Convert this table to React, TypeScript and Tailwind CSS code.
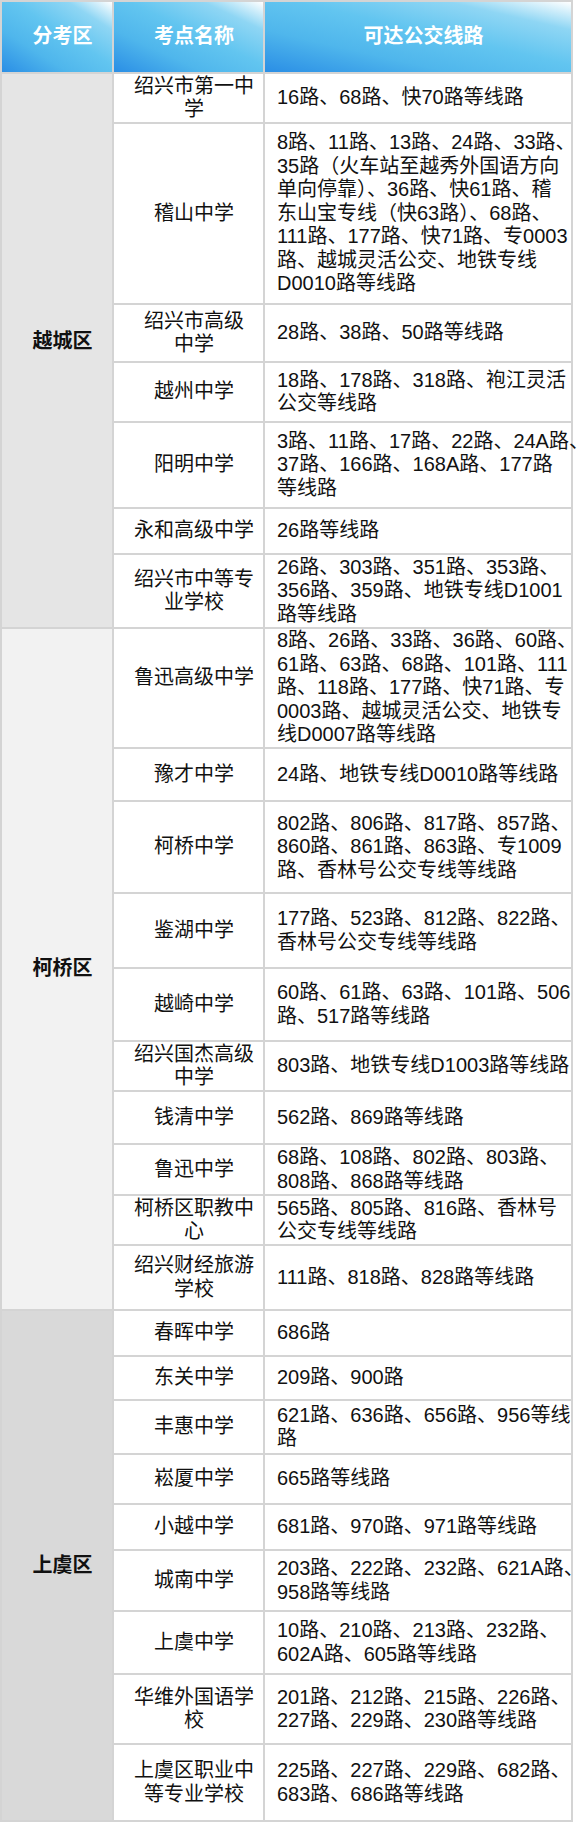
import React from "react";

type Row = { name: string[]; routes: string[]; nameCls?: string };
type Group = { label: string; bg: string; span: string; labelCls?: string; rows: Row[] };

const groups: Group[] = [
  {
    label: "越城区",
    bg: "bg-[#e5e5e5]",
    span: "row-span-7",
    labelCls: "pb-[18px]",
    rows: [
      { name: ["绍兴市第一中", "学"], routes: ["16路、68路、快70路等线路"] },
      {
        name: ["稽山中学"],
        routes: [
          "8路、11路、13路、24路、33路、",
          "35路（火车站至越秀外国语方向",
          "单向停靠）、36路、快61路、稽",
          "东山宝专线（快63路）、68路、",
          "111路、177路、快71路、专0003",
          "路、越城灵活公交、地铁专线",
          "D0010路等线路",
        ],
      },
      { name: ["绍兴市高级", "中学"], routes: ["28路、38路、50路等线路"] },
      { name: ["越州中学"], routes: ["18路、178路、318路、袍江灵活", "公交等线路"] },
      {
        name: ["阳明中学"],
        routes: ["3路、11路、17路、22路、24A路、", "37路、166路、168A路、177路", "等线路"],
      },
      { name: ["永和高级中学"], routes: ["26路等线路"] },
      {
        name: ["绍兴市中等专", "业学校"],
        routes: ["26路、303路、351路、353路、", "356路、359路、地铁专线D1001", "路等线路"],
      },
    ],
  },
  {
    label: "柯桥区",
    bg: "bg-[#f2f2f2]",
    span: "row-span-10",
    rows: [
      {
        name: ["鲁迅高级中学"],
        nameCls: "pb-[20px]",
        routes: [
          "8路、26路、33路、36路、60路、",
          "61路、63路、68路、101路、111",
          "路、118路、177路、快71路、专",
          "0003路、越城灵活公交、地铁专",
          "线D0007路等线路",
        ],
      },
      { name: ["豫才中学"], routes: ["24路、地铁专线D0010路等线路"] },
      {
        name: ["柯桥中学"],
        routes: ["802路、806路、817路、857路、", "860路、861路、863路、专1009", "路、香林号公交专线等线路"],
      },
      { name: ["鉴湖中学"], routes: ["177路、523路、812路、822路、", "香林号公交专线等线路"] },
      { name: ["越崎中学"], routes: ["60路、61路、63路、101路、506", "路、517路等线路"] },
      { name: ["绍兴国杰高级", "中学"], routes: ["803路、地铁专线D1003路等线路"] },
      { name: ["钱清中学"], routes: ["562路、869路等线路"] },
      { name: ["鲁迅中学"], routes: ["68路、108路、802路、803路、", "808路、868路等线路"] },
      { name: ["柯桥区职教中", "心"], routes: ["565路、805路、816路、香林号", "公交专线等线路"] },
      { name: ["绍兴财经旅游", "学校"], routes: ["111路、818路、828路等线路"] },
    ],
  },
  {
    label: "上虞区",
    bg: "bg-[#d9d9d9]",
    span: "row-span-9",
    rows: [
      { name: ["春晖中学"], routes: ["686路"] },
      { name: ["东关中学"], routes: ["209路、900路"] },
      { name: ["丰惠中学"], routes: ["621路、636路、656路、956等线", "路"] },
      { name: ["崧厦中学"], routes: ["665路等线路"] },
      { name: ["小越中学"], routes: ["681路、970路、971路等线路"] },
      { name: ["城南中学"], routes: ["203路、222路、232路、621A路、", "958路等线路"] },
      { name: ["上虞中学"], routes: ["10路、210路、213路、232路、", "602A路、605路等线路"] },
      { name: ["华维外国语学", "校"], routes: ["201路、212路、215路、226路、", "227路、229路、230路等线路"] },
      { name: ["上虞区职业中", "等专业学校"], routes: ["225路、227路、229路、682路、", "683路、686路等线路"] },
    ],
  },
];

const headerCls =
  "flex items-center justify-center pl-[11px] text-white font-bold bg-[linear-gradient(to_top_right,#2a8ee5_0%,#4fb6ec_30%,#62c5f0_55%,#8fd6f4_80%,#ffffff_100%)]";

export default function App() {
  return (
    <div className="w-[588px] min-h-[1822px] bg-white overflow-hidden [font-family:'Liberation_Sans','Noto_Sans_CJK_SC',sans-serif] text-[20px] leading-[23.5px] text-[#111111]">
      <div className="grid w-[573px] bg-[#d4d4d4] p-[2px] gap-[2px] grid-cols-[110px_149px_306px] grid-rows-[70px_48px_179px_56px_58px_84px_44px_72px_118px_51px_90px_73px_71px_48px_51px_49px_48px_63px_44px_42px_52px_48px_44px_59px_61px_68px_75px]">
        <div className={headerCls}>分考区</div>
        <div className={headerCls}>考点名称</div>
        <div className={headerCls}>可达公交线路</div>
        {groups.map((g) => (
          <React.Fragment key={g.label}>
            <div
              className={`col-start-1 ${g.span} ${g.bg} ${g.labelCls ?? ""} flex items-center justify-center pl-[11px] font-bold`}
            >
              {g.label}
            </div>
            {g.rows.map((r, i) => (
              <React.Fragment key={i}>
                <div
                  className={`col-start-2 bg-white flex flex-col items-center justify-center pl-[11px] text-center whitespace-nowrap ${r.nameCls ?? ""}`}
                >
                  {r.name.map((n, j) => (
                    <span key={j}>{n}</span>
                  ))}
                </div>
                <div className="col-start-3 bg-white flex flex-col justify-center pl-[12px] whitespace-nowrap">
                  {r.routes.map((t, j) => (
                    <span key={j}>{t}</span>
                  ))}
                </div>
              </React.Fragment>
            ))}
          </React.Fragment>
        ))}
      </div>
    </div>
  );
}
